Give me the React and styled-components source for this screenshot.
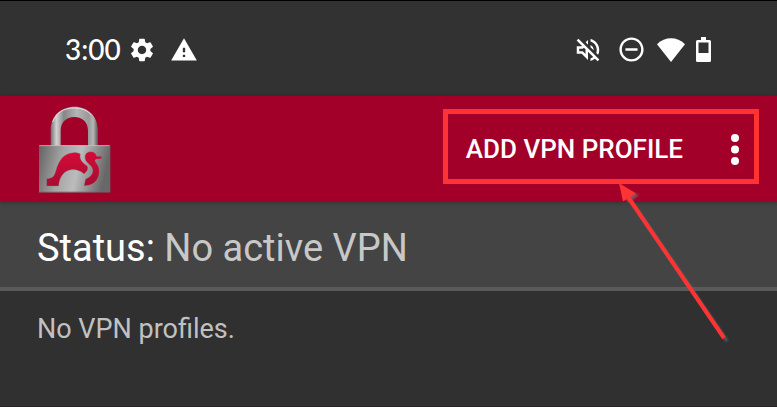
import React from "react";
import styled, { createGlobalStyle } from "styled-components";
import {
  MdSettings,
  MdWarning,
  MdOutlineVolumeOff,
  MdRemoveCircleOutline,
} from "react-icons/md";

const GlobalStyle = createGlobalStyle`
  * { box-sizing: border-box; }
  html, body, #root { height: 100%; }
  body {
    margin: 0;
    background: #303030;
    font-family: Roboto, "Liberation Sans", sans-serif;
  }
`;

const Screen = styled.div`
  display: flex;
  flex-direction: column;
  min-height: 100%;
  background: #303030;
  border-bottom: 1px solid #292426;
`;

const SystemBar = styled.div`
  display: flex;
  align-items: center;
  justify-content: space-between;
  padding: 35px 66px 33px 65px;
  border-top: 1px solid #000;
  background: #323232;
  color: #fff;
`;

const IconGroup = styled.div`
  display: flex;
  align-items: center;
  gap: ${(p) => p.$gap}px;
  height: 27px;

  svg { display: block; flex: none; }
`;

const Clock = styled.time`
  font: 500 28px/27px Lato, sans-serif;
`;

const AppBar = styled.header`
  position: relative;
  z-index: 1;
  display: flex;
  align-items: center;
  justify-content: space-between;
  padding: 10px 18px 9px 38px;
  background: #a20028;
  box-shadow: 0 1px 4px rgba(0, 0, 0, 0.25);

  > svg { display: block; flex: none; }
`;

const Actions = styled.div`
  position: relative;
  display: flex;
  align-items: center;
  gap: 48px;
  height: 75px;
  margin-bottom: 6px;
  padding: 5px 15px 0 18px;
  border: 5px solid #ff3333;
`;

const BarButton = styled.button`
  display: flex;
  align-items: center;
  padding: 0;
  border: 0;
  background: none;
  color: #fff;
  font: 500 26px/32px Roboto, sans-serif;
  white-space: nowrap;
  cursor: pointer;
`;

const Pointer = styled.svg`
  position: absolute;
  top: 65px;
  right: 24px;
  pointer-events: none;
`;

const StatusRow = styled.section`
  padding: 24px 37px 17px;
  border-bottom: 4px solid #5a5a5a;
  background: #444;
  color: #fff;
  font-size: 38px;
  line-height: 44px;
`;

const StatusValue = styled.span`
  color: #c8c8c8;
`;

const EmptyMessage = styled.p`
  margin: 0;
  padding: 22px 37px;
  color: #c1c1c1;
  font-size: 27px;
  line-height: 32px;
`;

function WifiIcon() {
  return (
    <svg width="28" height="24" viewBox="0 0 28 24" fill="#fff" role="img" aria-label="Wi-Fi">
      <path d="M14 24 0 6.2C8-1.7 20-1.7 28 6.2Z" />
    </svg>
  );
}

function BatteryIcon() {
  return (
    <svg width="15" height="25" viewBox="0 0 15 25" role="img" aria-label="Battery">
      <path
        fill="#fff"
        fillRule="evenodd"
        d="M5 0h5v3h3.500q1.500 0 1.500 1.500v19q0 1.500-1.500 1.500H1.500Q0 25 0 23.500v-19Q0 3 1.500 3H5ZM2.500 5.500V16h10V5.500Z"
      />
    </svg>
  );
}

function PadlockLogo() {
  return (
    <svg width="73" height="87" viewBox="39 30 219 261" role="img" aria-label="VPN padlock">
      <defs>
        <linearGradient id="body" x1="0" y1="0" x2="1" y2="0.150">
          <stop offset="0" stopColor="#626262" />
          <stop offset="0.350" stopColor="#a4a4a4" />
          <stop offset="0.600" stopColor="#bcbcbc" />
          <stop offset="1" stopColor="#686868" />
        </linearGradient>
        <linearGradient id="shackle" x1="0" y1="0" x2="1" y2="0">
          <stop offset="0" stopColor="#707070" />
          <stop offset="0.120" stopColor="#d2d2d2" />
          <stop offset="0.280" stopColor="#858585" />
          <stop offset="0.550" stopColor="#b5b5b5" />
          <stop offset="0.800" stopColor="#999" />
          <stop offset="0.900" stopColor="#b5b5b5" />
          <stop offset="1" stopColor="#555" />
        </linearGradient>
        <linearGradient id="bird" x1="0" y1="0" x2="0" y2="1">
          <stop offset="0" stopColor="#d50b37" />
          <stop offset="1" stopColor="#a90b31" />
        </linearGradient>
      </defs>
      <path
        fill="url(#shackle)"
        d="M77 152V103C77 60 108 32 148 32S219 60 219 103V152H189V104C189 79 173 63 148 63S107 79 107 104V152Z"
      />
      <path fill="none" stroke="#e2e2e2" strokeWidth="3" d="M83 78C92 51 116 36 148 36C170 36 187 43 199 57" />
      <rect x="42" y="148" width="213" height="141" fill="url(#body)" />
      <path fill="none" stroke="#cecece" strokeWidth="2" d="M43 149H254" />
      <path fill="none" stroke="#666" strokeWidth="2" d="M42 288H255V149" />
      <path
        fill="url(#bird)"
        stroke="#858585"
        strokeWidth="1"
        d="M65 270V248C84 247 87 241 92 226C101 191 118 171 145 170C153 169 160 171 166 174C163 190 171 199 184 208C192 214 189 225 177 234C168 225 153 220 139 221C119 223 103 240 101 270Z"
      />
      <path
        fill="url(#bird)"
        stroke="#858585"
        strokeWidth="1"
        d="M180 183C180 172 188 167 198 167C207 167 213 172 215 181H230V188L213 190C208 193 210 197 216 204C229 222 223 254 201 264C193 268 187 269 177 269L182 249C199 243 207 230 202 217C197 204 180 201 180 183Z"
      />
    </svg>
  );
}

function MoreIcon() {
  return (
    <svg width="8" height="31" viewBox="0 0 8 31" fill="#fff" aria-hidden="true">
      <circle cx="4" cy="4" r="4" />
      <circle cx="4" cy="15.500" r="4" />
      <circle cx="4" cy="27" r="4" />
    </svg>
  );
}

function PointerArrow() {
  return (
    <Pointer width="120" height="165" viewBox="0 0 120 165" aria-hidden="true">
      <defs>
        <filter id="soft" x="-10%" y="-10%" width="120%" height="120%">
          <feGaussianBlur stdDeviation="1" />
        </filter>
      </defs>
      <g fill="#777" stroke="#777" opacity="0.700" filter="url(#soft)">
        <path d="M19 19 117 162" strokeWidth="2.500" />
        <path stroke="none" d="m13 9 5 15 11-8Z" />
      </g>
      <path d="M18 18 114 159" stroke="#ff3333" strokeWidth="4" />
      <path d="M9 4 13 22.500 26 14.500Z" fill="#ff3333" />
    </Pointer>
  );
}

export default function App() {
  return (
    <>
      <GlobalStyle />
      <Screen>
        <SystemBar>
          <IconGroup $gap={14}>
            <IconGroup $gap={7}>
              <Clock>3:00</Clock>
              <MdSettings size={28} />
            </IconGroup>
            <MdWarning size={28} />
          </IconGroup>
          <IconGroup $gap={14}>
            <MdOutlineVolumeOff size={30} />
            <IconGroup $gap={11}>
              <MdRemoveCircleOutline size={29} />
              <WifiIcon />
              <BatteryIcon />
            </IconGroup>
          </IconGroup>
        </SystemBar>
        <AppBar>
          <PadlockLogo />
          <Actions>
            <BarButton type="button">ADD VPN PROFILE</BarButton>
            <BarButton type="button" aria-label="More options">
              <MoreIcon />
            </BarButton>
            <PointerArrow />
          </Actions>
        </AppBar>
        <main>
          <StatusRow>
            Status: <StatusValue>No active VPN</StatusValue>
          </StatusRow>
          <EmptyMessage>No VPN profiles.</EmptyMessage>
        </main>
      </Screen>
    </>
  );
}
